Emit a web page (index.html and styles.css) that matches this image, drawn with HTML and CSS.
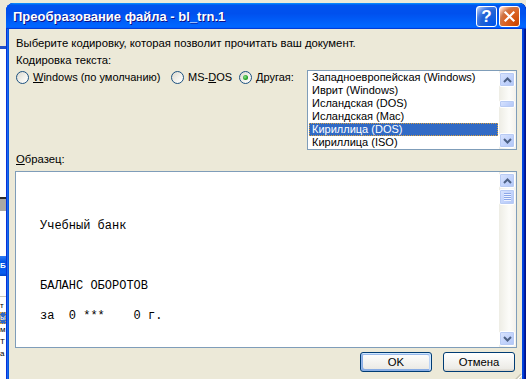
FILE: index.html
```html
<!DOCTYPE html>
<html lang="ru">
<head>
    <meta charset="utf-8" />
    <title>Преобразование файла</title>
    <link rel="stylesheet" href="styles.css">
</head>
<body>
    <!-- bits of the windows behind the dialog -->
    <div class="desk">
        <div class="desk-gray"></div>
        <div class="desk-line"></div>
        <div class="desk-white tall"></div>
        <div class="desk-dark"></div>
        <div class="desk-grey"></div>
        <div class="desk-white mid"></div>
        <div class="desk-title">Б</div>
        <div class="desk-list">
            <div class="desk-row">т</div>
            <div class="desk-row sel">ы</div>
            <div class="desk-row">м</div>
            <div class="desk-row">Т</div>
            <div class="desk-row">а</div>
        </div>
    </div>

    <div class="dialog">
        <div class="titlebar">
            <span class="title">Преобразование файла - bl_trn.1</span>
            <div class="tb-buttons">
                <button class="tb-btn help">?</button>
                <button class="tb-btn close">
                    <svg width="13" height="13" viewBox="0 0 13 13"><path d="M2.5 2.5 L10.5 10.5 M10.5 2.5 L2.5 10.5" stroke="#fff" stroke-width="2.2" stroke-linecap="square"/></svg>
                </button>
            </div>
        </div>

        <div class="frame-body">
            <p class="intro">Выберите кодировку, которая позволит прочитать ваш документ.</p>
            <p class="label">Кодировка текста:</p>

            <div class="enc-row">
                <div class="radios">
                    <label class="radio r-win"><span class="radio-dot"></span><span><span class="ak">W</span>indows (по умолчанию)</span></label>
                    <label class="radio r-dos"><span class="radio-dot"></span><span>MS-<span class="ak">D</span>OS</span></label>
                    <label class="radio"><span class="radio-dot checked"></span><span><span class="ak">Д</span>ругая:</span></label>
                </div>
                <div class="listbox">
                    <ul class="items">
                        <li>Западноевропейская (Windows)</li>
                        <li>Иврит (Windows)</li>
                        <li>Исландская (DOS)</li>
                        <li>Исландская (Mac)</li>
                        <li class="selected">Кириллица (DOS)</li>
                        <li>Кириллица (ISO)</li>
                    </ul>
                    <div class="sb">
                        <div class="sb-btn"><svg width="9" height="6" viewBox="0 0 9 6"><path d="M1 5 L4.5 1.5 L8 5" fill="none" stroke="#4d6185" stroke-width="2"/></svg></div>
                        <div class="sb-thumb small"></div>
                        <div class="sb-btn down"><svg width="9" height="6" viewBox="0 0 9 6"><path d="M1 1 L4.5 4.5 L8 1" fill="none" stroke="#4d6185" stroke-width="2"/></svg></div>
                    </div>
                </div>
            </div>

            <p class="label sample-label"><span class="ak">О</span>бразец:</p>
            <div class="sample">
<pre class="sample-text">



Учебный банк



БАЛАНС ОБОРОТОВ

за  0 ***    0 г.
</pre>
                <div class="sb">
                    <div class="sb-btn"><svg width="9" height="6" viewBox="0 0 9 6"><path d="M1 5 L4.5 1.5 L8 5" fill="none" stroke="#4d6185" stroke-width="2"/></svg></div>
                    <div class="sb-thumb">
                        <svg width="7" height="8" viewBox="0 0 7 8"><path d="M0 0.5 H7 M0 2.5 H7 M0 4.5 H7 M0 6.5 H7" stroke="#8ca7e8" stroke-width="1"/><path d="M0 1.5 H7 M0 3.5 H7 M0 5.5 H7 M0 7.5 H7" stroke="#eef3ff" stroke-width="1"/></svg>
                    </div>
                    <div class="sb-btn down"><svg width="9" height="6" viewBox="0 0 9 6"><path d="M1 1 L4.5 4.5 L8 1" fill="none" stroke="#4d6185" stroke-width="2"/></svg></div>
                </div>
            </div>

            <div class="actions">
                <button class="btn default">OK</button>
                <button class="btn">Отмена</button>
            </div>

            <svg class="grip" width="12" height="12" viewBox="0 0 12 12">
                <path d="M11 3 L3 11 M11 7 L7 11" stroke="#c5c2b2" stroke-width="1.2"/>
                <path d="M12 4 L4 12 M12 8 L8 12" stroke="#fff" stroke-width="1"/>
            </svg>
        </div>
    </div>
</body>
</html>
```

FILE: styles.css
```css
* {
    box-sizing: border-box;
}
body {
    margin: 0;
    width: 526px;
    height: 379px;
    overflow: hidden;
    position: relative;
    background-color: #ece9d8;
    font-family: "Liberation Sans", Arial, sans-serif;
    font-size: 11.3px;
    color: #000;
}
p {
    margin: 0;
}

/* desktop behind the dialog */
.desk {
    position: absolute;
    left: 0;
    top: 0;
    width: 6px;
    height: 379px;
    overflow: hidden;
}
.desk-gray {
    height: 46px;
}
.desk-line {
    height: 3px;
    background-color: #2451c8;
}
.desk-white {
    background-color: #fff;
}
.desk-white.tall {
    height: 148px;
}
.desk-white.mid {
    height: 45px;
}
.desk-dark {
    height: 2px;
    background-color: #2b2b2b;
}
.desk-grey {
    height: 12px;
    background-color: #a9a8a4;
}
.desk-title {
    height: 20px;
    background: linear-gradient(180deg, #2e7bf5, #0054e3 30%, #0a5ef0 85%, #0046c8);
    color: #fff;
    font-weight: bold;
    font-size: 8px;
    line-height: 20px;
}
.desk-list {
    height: 103px;
    background-color: #fff;
    padding-top: 24px;
    font-size: 8px;
}
.desk-list::before {
    content: "";
    display: block;
    height: 1px;
    margin-top: -4px;
    margin-bottom: 3px;
    background-color: #c9c7ba;
}
.desk-row {
    height: 12px;
    line-height: 12px;
}
.desk-row.sel {
    background-color: #316ac5;
    color: #fff;
    outline: 1px dotted #d8a040;
    outline-offset: -1px;
}

/* dialog window */
.dialog {
    position: absolute;
    left: 6px;
    top: 3px;
    width: 520px;
    height: 380px;
    display: flex;
    flex-direction: column;
    border-radius: 8px 7px 0 0;
    background-color: #0054e3;
    box-shadow: inset 1px 0 #0831d9, inset 2px 0 #166aee, inset 3px 0 #0855dd,
        inset -1px 0 #00138c, inset -2px 0 #001ea0, inset -3px 0 #003bda, inset -4px 0 #0046dd;
}
.titlebar {
    height: 26px;
    display: flex;
    align-items: center;
    padding: 0 6px 0 7px;
    border-radius: 8px 7px 0 0;
    background: linear-gradient(180deg, #0997ff, #0053ee 8%, #0050ee 40%, #06f 88%, #06f 93%, #005bff 95%, #003dd7 96%, #003dd7);
}
.title {
    flex: 1;
    color: #fff;
    font-weight: bold;
    font-size: 13px;
    padding-top: 1px;
    text-shadow: 1px 1px #0f1089;
    white-space: nowrap;
}
.tb-buttons {
    display: flex;
    gap: 2px;
}
.tb-btn {
    width: 21px;
    height: 21px;
    padding: 0;
    border: 1px solid #fff;
    border-radius: 3px;
    display: flex;
    align-items: center;
    justify-content: center;
    color: #fff;
}
.tb-btn.help {
    background: radial-gradient(circle at 90% 90%, #0054e9 0%, #2263d5 55%, #4479e4 70%, #a3bbec 90%, #fff 100%);
    font-family: "Liberation Sans", Arial, sans-serif;
    font-weight: bold;
    font-size: 17px;
    line-height: 19px;
}
.tb-btn.close {
    background: radial-gradient(circle at 90% 90%, #cc4600 0%, #dc6527 55%, #cd7546 70%, #ffccb2 90%, #fff 100%);
}

.frame-body {
    flex: 1;
    position: relative;
    margin: 0 4px 0 3px;
    padding: 8px 5px 0 6px;
    background-color: #ece9d8;
    line-height: 13px;
}
.intro, .label {
    padding-left: 1px;
}
.label {
    margin-top: 4px;
}
.sample-label {
    margin-top: 3px;
}
.ak {
    text-decoration: underline;
}

.enc-row {
    display: flex;
    margin-top: 3px;
}
.radios {
    display: flex;
    margin-top: 1px;
    padding-left: 1px;
    height: 13px;
    font-size: 11px;
}
.radio {
    display: flex;
    align-items: center;
    gap: 4px;
    white-space: nowrap;
}
.radio.r-win {
    width: 155px;
}
.radio.r-dos {
    width: 68px;
}
.radio-dot {
    position: relative;
    width: 13px;
    height: 13px;
    border: 1px solid #1c5180;
    border-radius: 50%;
    background: linear-gradient(135deg, #dcd9cf, #f4f3ee 60%, #fff);
}
.radio-dot.checked::after {
    content: "";
    position: absolute;
    left: 3px;
    top: 3px;
    width: 5px;
    height: 5px;
    border-radius: 50%;
    background: radial-gradient(circle at 40% 40%, #8fe08f, #21a121 60%, #138313);
}

.listbox {
    flex-shrink: 0;
    margin-left: auto;
    width: 210px;
    height: 80px;
    display: flex;
    border: 1px solid #7f9db9;
    background-color: #fff;
    font-size: 11px;
}
.items {
    flex: 1;
    list-style: none;
    margin: 0;
    padding: 0 1px;
}
.items li {
    height: 13px;
    line-height: 13px;
    padding-left: 3px;
    white-space: nowrap;
}
.items li.selected {
    background-color: #316ac5;
    color: #fff;
    outline: 1px dotted #d8a040;
    outline-offset: -1px;
}

/* XP style scroll bars */
.sb {
    width: 17px;
    display: flex;
    flex-direction: column;
    background: linear-gradient(90deg, #eeede5, #fcfcf9 60%, #f3f1ec);
}
.sb-btn, .sb-thumb {
    width: 16px;
    height: 15px;
    margin: 1px 0 0 0;
    border: 1px solid #fff;
    border-radius: 2px;
    display: flex;
    align-items: center;
    justify-content: center;
    background: linear-gradient(135deg, #dbe5fd, #c2d3fc 55%, #b0c5f5);
    box-shadow: inset 0 0 0 1px #b8cbf4;
}
.sb-btn.down {
    margin-top: auto;
    margin-bottom: 1px;
}
.sb-thumb {
    height: 16px;
    margin-top: 1px;
}
.sb-thumb.small {
    height: 8px;
    margin-top: 13px;
}

.sample {
    display: flex;
    height: 177px;
    margin-top: 5px;
    border: 1px solid #7f9db9;
    background-color: #fff;
}
.sample-text {
    flex: 1;
    margin: 0;
    padding: 2px 0 0 24px;
    overflow: hidden;
    font-family: "Liberation Mono", "Courier New", monospace;
    font-size: 12px;
    line-height: 15px;
}

.actions {
    display: flex;
    justify-content: flex-end;
    gap: 11px;
    margin-top: 4px;
    padding-right: 2px;
}
.btn {
    width: 72px;
    height: 20px;
    padding: 0;
    border: 1px solid #003c74;
    border-radius: 3px;
    background: linear-gradient(180deg, #fff, #ecebe6 86%, #d6d0c5);
    font-family: "Liberation Sans", Arial, sans-serif;
    font-size: 11.3px;
    color: #000;
}
.btn.default {
    box-shadow: inset -1px 1px #cee7ff, inset 1px 2px #98b8ea, inset -2px 2px #bcd4f6,
        inset 1px -1px #89ade4, inset 2px -2px #89ade4;
}
.grip {
    position: absolute;
    right: 0;
    bottom: 0;
}
```
